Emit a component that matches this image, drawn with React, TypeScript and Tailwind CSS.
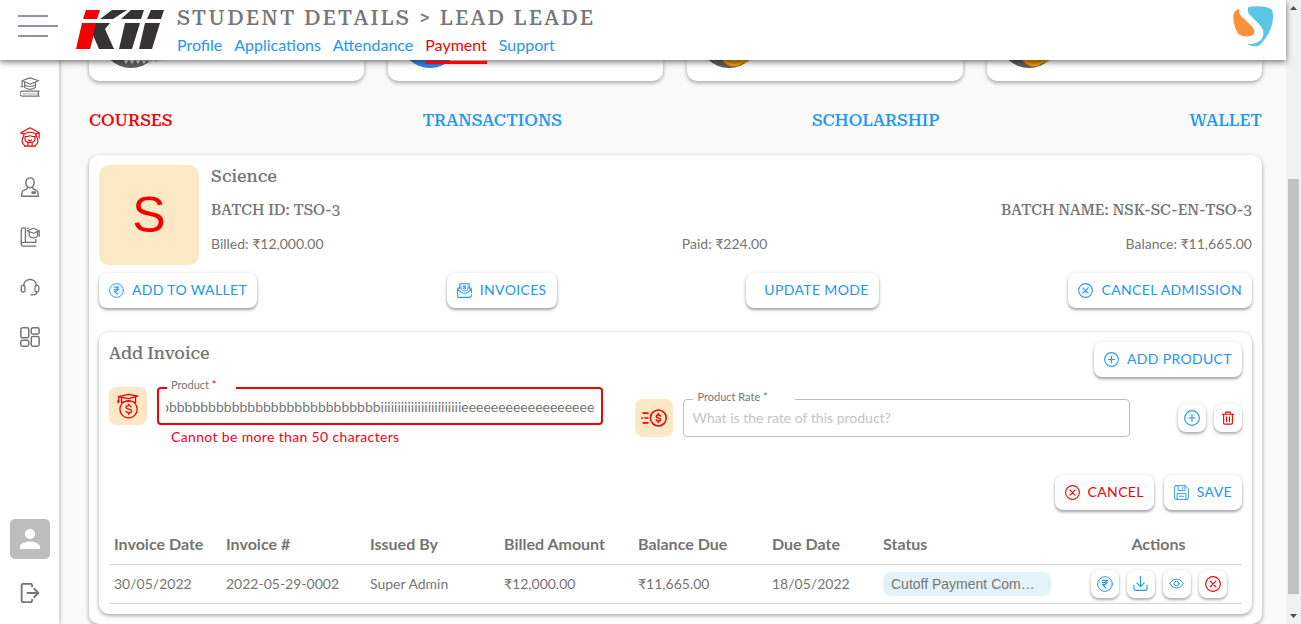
import { useEffect, useRef, type ReactNode } from "react";
import { MdPerson } from "react-icons/md";

type IconProps = { className?: string };

function Stroke({ className = "size-4", width = 1.5, children }: { className?: string; width?: number; children: ReactNode }) {
  return (
    <svg viewBox="0 0 24 24" className={className} fill="none" stroke="currentColor" strokeWidth={width} strokeLinecap="round" strokeLinejoin="round" aria-hidden="true">
      {children}
    </svg>
  );
}

const RupeeIcon = ({ className }: IconProps) => (
  <Stroke className={className}>
    <circle cx="12" cy="12" r="11" />
    <path d="M8 6.500h8M8 10h8M8 6.500h2.500c4.500 0 4.500 6.500 0 6.500H8.500l5 5" strokeWidth="1.700" />
  </Stroke>
);
const CrossIcon = ({ className }: IconProps) => (
  <Stroke className={className} width={1.7}>
    <circle cx="12" cy="12" r="11" />
    <path d="M7.800 7.800l8.400 8.400M16.200 7.800l-8.400 8.400" />
  </Stroke>
);
const PlusIcon = ({ className }: IconProps) => (
  <Stroke className={className} width={1.7}>
    <circle cx="12" cy="12" r="11" />
    <path d="M12 7v10M7 12h10" />
  </Stroke>
);
const EnvelopeIcon = ({ className }: IconProps) => (
  <Stroke className={className} width={1.7}>
    <path d="M4.500 9V1.200h15V9M4 6.500 1 9.500v12A1.500 1.500 0 0 0 2.500 23H19a4 4 0 0 0 4-4M20 6.500l3 3V15M1 10l5.500 4.500c3 2.300 8 2.300 11 0L23 10" />
    <path d="M6.500 5c-1 4 1 8 5.500 8s6.500-4 5.500-8" strokeWidth="1.400" />
    <path d="M13.800 5.300c-.6-1.200-3.600-1.200-3.600.4 0 1.700 3.700.8 3.700 2.600 0 1.600-3.200 1.500-3.900.2" />
  </Stroke>
);
const SaveIcon = ({ className }: IconProps) => (
  <Stroke className={className} width={1.5}>
    <path d="M3 1h15l5 5v15a2 2 0 0 1-2 2H3a2 2 0 0 1-2-2V3a2 2 0 0 1 2-2z" />
    <path d="M6.500 1v8h11V1M14 3.500v2.500M5 23V13.500h14V23M8.500 18h7" />
  </Stroke>
);
const TrashIcon = ({ className }: IconProps) => (
  <Stroke className={className} width={2}>
    <path d="M2 5.500h20M8 5V2h8v3M4.500 6v14.500a2 2 0 0 0 2 2h11a2 2 0 0 0 2-2V6M9.500 10v8M14.500 10v8" />
  </Stroke>
);
const DownloadIcon = ({ className }: IconProps) => (
  <Stroke className={className} width={1.8}>
    <path d="M12 1v16M6 11l6 6 6-6M1.500 15v5a3 3 0 0 0 3 3h15a3 3 0 0 0 3-3v-5" />
  </Stroke>
);
const EyeIcon = ({ className }: IconProps) => (
  <Stroke className={className} width={1.6}>
    <path d="M1 12c6-9.500 16-9.500 22 0-6 9.500-16 9.500-22 0z" />
    <circle cx="12" cy="12" r="3.800" />
  </Stroke>
);
const MoneyCapIcon = ({ className }: IconProps) => (
  <Stroke className={className} width={1.2}>
    <circle cx="12.500" cy="15" r="8" />
    <path d="M3 3.300 12.500 1.200l8.500 1.600-8.500 2.400zM6 5v3.800c3-1.800 10-1.800 13 0V4M3.500 3.500v5M2.800 7v2" />
    <path d="M15 12.800c-.8-1.700-4.900-1.400-4.900.4 0 2.200 5.200 1.300 5.200 3.500 0 2-4.400 2.200-5.200.2M12.600 10.500v1M12.600 18.500v1.300" />
  </Stroke>
);
const MoneyRateIcon = ({ className }: IconProps) => (
  <Stroke className={className} width={1.4}>
    <circle cx="16" cy="12" r="7.300" />
    <path d="M18 10.300c-.7-1.400-3.900-1.300-3.900.3 0 1.900 4 1 4 2.900 0 1.700-3.400 1.700-4.100.2M16 7.800v1M16 15v1.200M2 7.500h4.500M3.500 12h3M2 16.500h4.500M.5 12h.8" />
  </Stroke>
);

const CapBookIcon = () => (
  <Stroke className="size-5" width={1.4}>
    <path d="M2.500 4.500 12 1l10.500 3.500L12 8.500zM5.500 6v6.500c3 3 10.500 3 13 0V6M5.500 9.500c3 2.500 10.500 2.500 13 0M2.500 4.500v7M1.200 11.500h2.600" />
    <path d="M23 17H3a2.700 2.700 0 0 0 0 6h20M22 17v6" />
    <path d="M4 20h18" strokeWidth="2.500" opacity=".35" />
  </Stroke>
);
const StudentIcon = () => (
  <Stroke className="size-5" width={1.4}>
    <path d="M1 7 12 1l11 6M1 7l4 1.500M23 7v6.500M19 8.500 23 7M5 8.500c3-3 11-3 14 0v2M5 8.500c-.5 3-3 5-2.500 9 .3 2.500 2 4 3.500 5M19 9c.5 3 3 4.500 2.500 8.500-.3 2.500-2 4-3.500 5" />
    <path d="M6 11.500c4.500 0 5-1 6-1s1.500 1 6 1v2.500c0 6-12 6-12 0zM10 15.500c1.200 1 2.800 1 4 0M5.500 23h13M9.500 19v3.500M14.500 19v3.500" />
  </Stroke>
);
const PersonIcon = () => (
  <Stroke className="size-5" width={1.7}>
    <path d="M12 1c3.500 0 5 2.500 5 5.500S15 13 12 13 7 9.500 7 6.500 8.500 1 12 1zM9 12.500c-.3 2.500-1.500 2.500-4 3.300-2.500.7-3 2.700-3 7.200h20c0-4.500-.5-6.500-3-7.200-2.500-.8-3.700-.8-4-3.300" />
    <path d="M14.500 18h4v1.500h-4z" />
  </Stroke>
);
const BookIcon = () => (
  <Stroke className="size-5" width={1.6}>
    <path d="M6.500 1H4a2.500 2.500 0 0 0-2.500 2.500v17A2.500 2.500 0 0 0 4 23h15M6.500 1v17M6.500 18.500H19V15M6.500 18.500H4c-1.500 0-2.500 1-2.500 2M9 1.500h1" />
    <path d="M8.500 4.500 16 1.500l7 3-7 3zM11 6v4.500c2 3.500 8 3.500 10 0V6M23 4.500V11" />
  </Stroke>
);
const HeadsetIcon = () => (
  <Stroke className="size-5" width={1.6}>
    <path d="M4.500 10.500c0-10 15-10 15 0M20 18c0 2-2 3.500-5 3.500h-2" />
    <rect x="1.500" y="10" width="4.500" height="8" rx="1.800" />
    <rect x="18" y="10" width="4.500" height="8" rx="1.800" />
  </Stroke>
);
const GridIcon = () => (
  <Stroke className="size-5" width={1.8}>
    <rect x="1" y="1" width="9.500" height="12" rx="2" />
    <rect x="13.500" y="1" width="9.500" height="7.500" rx="2" />
    <rect x="1" y="16" width="9.500" height="7" rx="2" />
    <rect x="13.500" y="11.500" width="9.500" height="11.500" rx="2" />
  </Stroke>
);
const LogoutIcon = () => (
  <Stroke className="size-5" width={2.2}>
    <path d="M14.500 4V3a2 2 0 0 0-2-2H4a2 2 0 0 0-2 2v18a2 2 0 0 0 2 2h8.500a2 2 0 0 0 2-2v-1M9 12h12.500M17 7l5 5-5 5" />
  </Stroke>
);

function BrandLogo() {
  return (
    <svg viewBox="0 0 89 41" className="h-[41px] w-[89px]" role="img" aria-label="Kii">
      <path fill="#f50000" d="M11 1h14l-3 9H8zM7 14h15l-7 26H1z" />
      <path fill="#353334" d="M37 1h15L38 10H25zM21 14h14l-5 6 9 20H24l-6-14z" />
      <path fill="#353334" d="M56 1h13l-3 9H46zM50 14h15l-8 26H44zM76 1h13l-3 9H72zM70 14h15l-8 26H64z" />
    </svg>
  );
}

function PartnerLogo() {
  return (
    <svg viewBox="0 0 41 41" className="size-[41px]" role="img" aria-label="Partner">
      <path fill="#fa9237" d="M6 3C2 4 0 7 .3 12c.4 7 2.500 12.500 5.700 16.500 5 2.500 13.500 3 15-1 1.500-3.500-1-6-4-9L9 11C6.500 8.500 6 6.500 6 3z" />
      <path fill="#58c6e4" d="M15.500 1C24-.3 32 .3 37 2.500c3 1.500 3.300 5 3 9-.5 10-5 19-13 27.500-2.500 2-9 1.500-12.500-1 8.500.5 14-2.500 15.500-8 1.500-5-1-9-5-13l-7-7c-3.500-3-3.700-6-2.500-9z" />
    </svg>
  );
}

function MetricPicture({ kind }: { kind: string }) {
  return (
    <svg viewBox="0 0 60 60" className="size-[60px] shrink-0" aria-hidden="true">
      <circle cx="30" cy="30" r="30" fill={kind === "blue" ? "#2e86ee" : "#606060"} />
      {kind === "coin" && (
        <g>
          <circle cx="35" cy="45" r="13.500" fill="#f39a00" />
          <path d="M42 56c5-1 8-3 10.500-6L50 46h-6z" fill="#f7ab05" />
          <circle cx="35" cy="46" r="9" fill="none" stroke="#c97800" />
          <path d="M41 57c3-2 5-4 6-7" stroke="#b96c00" fill="none" />
        </g>
      )}
      {kind === "paper" && <path d="M23 48h38v6l-3-2-3 3-3-3-3 4-3-4-3 4-3-4-3 4-3-4-3 4-3-4-3 4-2-3z" fill="#d8d8cc" />}
    </svg>
  );
}

function Button({ icon, children, tone = "text-[#2196f3]" }: { icon?: ReactNode; children: ReactNode; tone?: string }) {
  return (
    <button type="button" className={`flex h-[35px] items-center gap-2 rounded-lg bg-white px-2.5 text-sm tracking-wide shadow-[0_2px_3px_rgba(0,0,0,0.35),0_0_4px_rgba(0,0,0,0.08)] ${tone}`}>
      {icon ?? <span />}
      <span className="pb-0.5">{children}</span>
    </button>
  );
}

function IconButton({ label, children, tone = "text-[#2196f3]" }: { label: string; children: ReactNode; tone?: string }) {
  return (
    <button type="button" aria-label={label} className={`grid size-7 place-items-center rounded-lg bg-white shadow-[0_2px_3px_rgba(0,0,0,0.3),0_0_4px_rgba(0,0,0,0.08)] ${tone}`}>
      {children}
    </button>
  );
}

const slab = "font-['Roboto_Slab','Roboto_Serif','DejaVu_Serif',serif]";
const cardShadow = "shadow-[0_2px_4px_rgba(0,0,0,0.3),0_0_4px_rgba(0,0,0,0.08)]";
const navLinks = ["Profile", "Applications", "Attendance", "Payment", "Support"];
const tabs = ["COURSES", "TRANSACTIONS", "SCHOLARSHIP", "WALLET"];
const sideItems = [
  { label: "Courses", icon: <CapBookIcon /> },
  { label: "Students", icon: <StudentIcon />, active: true },
  { label: "Staff", icon: <PersonIcon /> },
  { label: "Library", icon: <BookIcon /> },
  { label: "Support desk", icon: <HeadsetIcon /> },
  { label: "Dashboard", icon: <GridIcon /> },
];
const columns = ["Invoice Date", "Invoice #", "Issued By", "Billed Amount", "Balance Due", "Due Date", "Status"];
const cells = ["30/05/2022", "2022-05-29-0002", "Super Admin", "₹12,000.00", "₹11,665.00", "18/05/2022"];
const productName = "b".repeat(40) + "i".repeat(24) + "e".repeat(18);

function Header() {
  return (
    <header className="relative z-20 flex h-[60px] shrink-0 items-start bg-white shadow-[0_2px_6px_rgba(0,0,0,0.55)]">
      <button type="button" aria-label="Menu" className="ml-[18px] mt-[15px] flex w-10 flex-col gap-2">
        <span className="h-0.5 w-[30px] bg-[#8d93a3]" />
        <span className="h-0.5 w-10 bg-[#8d93a3]" />
        <span className="h-0.5 w-[30px] bg-[#8d93a3]" />
      </button>
      <div className="ml-[17px] mt-[9px]">
        <BrandLogo />
      </div>
      <div className="ml-[13px] grow">
        <h1 className={`${slab} mt-1 text-[21px] font-medium leading-7 tracking-widest text-[#77777b]`}>STUDENT DETAILS &gt; LEAD LEADE</h1>
        <nav className="mt-px flex gap-3 text-base leading-6">
          {navLinks.map((name) => (
            <a key={name} href="#" className={name === "Payment" ? "relative text-[#f50000]" : "text-[#2196f3]"}>
              {name}
              {name === "Payment" && <span className="absolute inset-x-0 top-7 h-[3px] bg-[#ff0000]" />}
            </a>
          ))}
        </nav>
      </div>
      <div className="mr-3 mt-1.5">
        <PartnerLogo />
      </div>
    </header>
  );
}

function Sidebar() {
  return (
    <aside className="z-10 flex w-[59px] shrink-0 flex-col items-center justify-between bg-white pb-[21px] pl-px pt-[17px] shadow-[1px_0_4px_rgba(0,0,0,0.25)]">
      <nav className="flex flex-col gap-[30px]">
        {sideItems.map((item) => (
          <a key={item.label} href="#" aria-label={item.label} className={item.active ? "text-[#f50000]" : "text-[#757575]"}>
            {item.icon}
          </a>
        ))}
      </nav>
      <div className="flex flex-col items-center gap-6">
        <button type="button" aria-label="Account" className="grid size-10 place-items-center rounded-[5px] bg-[#bdbdbd] text-white">
          <MdPerson className="size-[30px]" />
        </button>
        <button type="button" aria-label="Log out" className="text-[#757575]">
          <LogoutIcon />
        </button>
      </div>
    </aside>
  );
}

function CourseSummary() {
  return (
    <section>
      <div className="flex gap-3">
        <div className="grid size-[100px] shrink-0 place-items-center rounded-[10px] bg-[#fce8c5] font-['Liberation_Sans',sans-serif] text-[50px] leading-none text-[#f50000]">S</div>
        <div className="flex grow flex-col gap-3">
          <h2 className={`${slab} text-[17px] font-medium leading-[22px]`}>Science</h2>
          <div className={`${slab} flex justify-between text-[15px] font-medium leading-[22px]`}>
            <p>BATCH ID: TSO-3</p>
            <p>BATCH NAME: NSK-SC-EN-TSO-3</p>
          </div>
          <div className="flex justify-between text-sm leading-[22px]">
            <p>Billed: ₹12,000.00</p>
            <p>Paid: ₹224.00</p>
            <p>Balance: ₹11,665.00</p>
          </div>
        </div>
      </div>
      <div className="mt-2 flex justify-between">
        <Button icon={<RupeeIcon className="size-[15px]" />}>ADD TO WALLET</Button>
        <Button icon={<EnvelopeIcon className="size-[15px]" />}>INVOICES</Button>
        <Button>UPDATE MODE</Button>
        <Button icon={<CrossIcon className="size-[15px]" />}>CANCEL ADMISSION</Button>
      </div>
    </section>
  );
}

function InvoiceForm() {
  const product = useRef<HTMLInputElement>(null);
  useEffect(() => {
    if (product.current) product.current.scrollLeft = product.current.scrollWidth;
  }, []);
  return (
    <form>
      <div className="flex items-start justify-between">
        <h2 className={`${slab} text-[17px] font-medium leading-[22px]`}>Add Invoice</h2>
        <Button icon={<PlusIcon className="size-[15px]" />}>ADD PRODUCT</Button>
      </div>
      <div className="mt-2.5 flex items-center">
        <div className="flex h-[62px] flex-1 gap-2.5">
          <span className="grid size-[38px] shrink-0 place-items-center rounded-lg bg-[#fce8c5] text-[#f50000]">
            <MoneyCapIcon className="size-[26px]" />
          </span>
          <div className="relative min-w-0 grow">
            <label htmlFor="product" className="absolute -top-2 left-2.5 w-[69px] bg-white pl-1 text-[11px] leading-3">
              Product <span className="text-[#f50000]">*</span>
            </label>
            <input id="product" ref={product} defaultValue={productName} aria-invalid="true" aria-describedby="product-error" className="block h-[38px] w-full rounded border-2 border-[#f50000] bg-white px-[7px] text-sm outline-none" />
            <p id="product-error" className="ml-3.5 mt-0.5 text-sm leading-5 tracking-wide text-[#f50020]">Cannot be more than 50 characters</p>
          </div>
        </div>
        <div className="ml-8 flex flex-1 gap-2.5">
          <span className="grid size-[38px] shrink-0 place-items-center rounded-lg bg-[#fce8c5] text-[#f50000]">
            <MoneyRateIcon className="size-[26px]" />
          </span>
          <div className="relative min-w-0 grow">
            <label htmlFor="rate" className="absolute -top-2 left-2.5 w-[102px] bg-white pl-1 text-[11px] leading-3">Product Rate *</label>
            <input id="rate" placeholder="What is the rate of this product?" className="block h-[38px] w-full rounded border border-[#bdbdbd] bg-white px-2 pb-0.5 text-sm outline-none placeholder:text-[#c4c4c4]" />
          </div>
        </div>
        <div className="ml-12 flex gap-2">
          <IconButton label="Add line"><PlusIcon className="size-4" /></IconButton>
          <IconButton label="Delete line" tone="text-[#f50000]"><TrashIcon className="size-3.5" /></IconButton>
        </div>
      </div>
      <div className="mt-[26px] flex justify-end gap-2.5">
        <Button tone="text-[#f50000]" icon={<CrossIcon className="size-[15px]" />}>CANCEL</Button>
        <Button icon={<SaveIcon className="size-[15px]" />}>SAVE</Button>
      </div>
    </form>
  );
}

function InvoiceTable() {
  return (
    <table className="mt-[15px] w-full table-fixed text-left">
      <colgroup>
        <col className="w-[112px]" />
        <col className="w-[144px]" />
        <col className="w-[134px]" />
        <col className="w-[134px]" />
        <col className="w-[134px]" />
        <col className="w-[111px]" />
        <col className="w-[197px]" />
        <col className="w-[167px]" />
      </colgroup>
      <thead>
        <tr className="h-[39px] border-b border-[#d5d7e2] text-base leading-5">
          {columns.map((name) => (
            <th key={name} className="whitespace-nowrap px-[5px] font-bold">{name}</th>
          ))}
          <th className="px-[5px] text-center font-bold">Actions</th>
        </tr>
      </thead>
      <tbody>
        <tr className="h-[39px] border-b border-[#d5d7e2] text-sm">
          {cells.map((value) => (
            <td key={value} className="whitespace-nowrap px-[5px]">{value}</td>
          ))}
          <td className="px-[5px]">
            <span className="block h-6 w-[168px] truncate rounded-lg bg-[#e4f2f9] px-2 font-['Liberation_Sans',sans-serif] leading-6">Cutoff Payment Com…</span>
          </td>
          <td>
            <div className="flex justify-center gap-2">
              <IconButton label="Pay"><RupeeIcon className="size-4" /></IconButton>
              <IconButton label="Download"><DownloadIcon className="size-[15px]" /></IconButton>
              <IconButton label="View"><EyeIcon className="size-[15px]" /></IconButton>
              <IconButton label="Cancel invoice" tone="text-[#f50000]"><CrossIcon className="size-4" /></IconButton>
            </div>
          </td>
        </tr>
      </tbody>
    </table>
  );
}

function ScrollRail() {
  return (
    <div className="flex w-[15px] shrink-0 flex-col items-center justify-between bg-[#f1f1f1] pb-1.5 pt-1.5" aria-hidden="true">
      <svg viewBox="0 0 7 4" className="h-1 w-[7px]"><path d="M0 4 3.500 0 7 4z" fill="#505050" /></svg>
      <div className="flex w-[11px] grow flex-col pb-5 pt-[169px]">
        <div className="grow bg-[#c1c1c1]" />
      </div>
      <svg viewBox="0 0 7 4" className="h-1 w-[7px]"><path d="M0 0 3.500 4 7 0z" fill="#505050" /></svg>
    </div>
  );
}

export default function App() {
  return (
    <div className="flex h-screen overflow-hidden bg-[#fafafa] font-['Lato',sans-serif] text-[#757575]">
      <div className="flex min-w-0 grow flex-col">
        <Header />
        <div className="flex min-h-0 grow">
          <Sidebar />
          <main className="min-w-0 grow overflow-hidden pl-[30px] pr-6">
            <div className="grid grid-cols-4 gap-6">
              {["paper", "blue", "coin", "coin"].map((kind, i) => (
                <div key={i} className={`rounded-b-[10px] bg-white ${cardShadow}`}>
                  <div className="flex h-[21px] items-end overflow-hidden pb-[13px] pl-3">
                    <MetricPicture kind={kind} />
                  </div>
                </div>
              ))}
            </div>
            <nav className={`${slab} mt-[27px] flex justify-between text-[17px] font-medium leading-6`}>
              {tabs.map((name) => (
                <a key={name} href="#" className={name === "COURSES" ? "text-[#f50000]" : "text-[#2196f3]"}>{name}</a>
              ))}
            </nav>
            <div className={`mt-[23px] rounded-[10px] bg-white p-2.5 ${cardShadow}`}>
              <CourseSummary />
              <section className={`mt-6 rounded-[10px] bg-white p-2.5 ${cardShadow}`}>
                <InvoiceForm />
                <InvoiceTable />
              </section>
            </div>
          </main>
        </div>
      </div>
      <ScrollRail />
    </div>
  );
}
